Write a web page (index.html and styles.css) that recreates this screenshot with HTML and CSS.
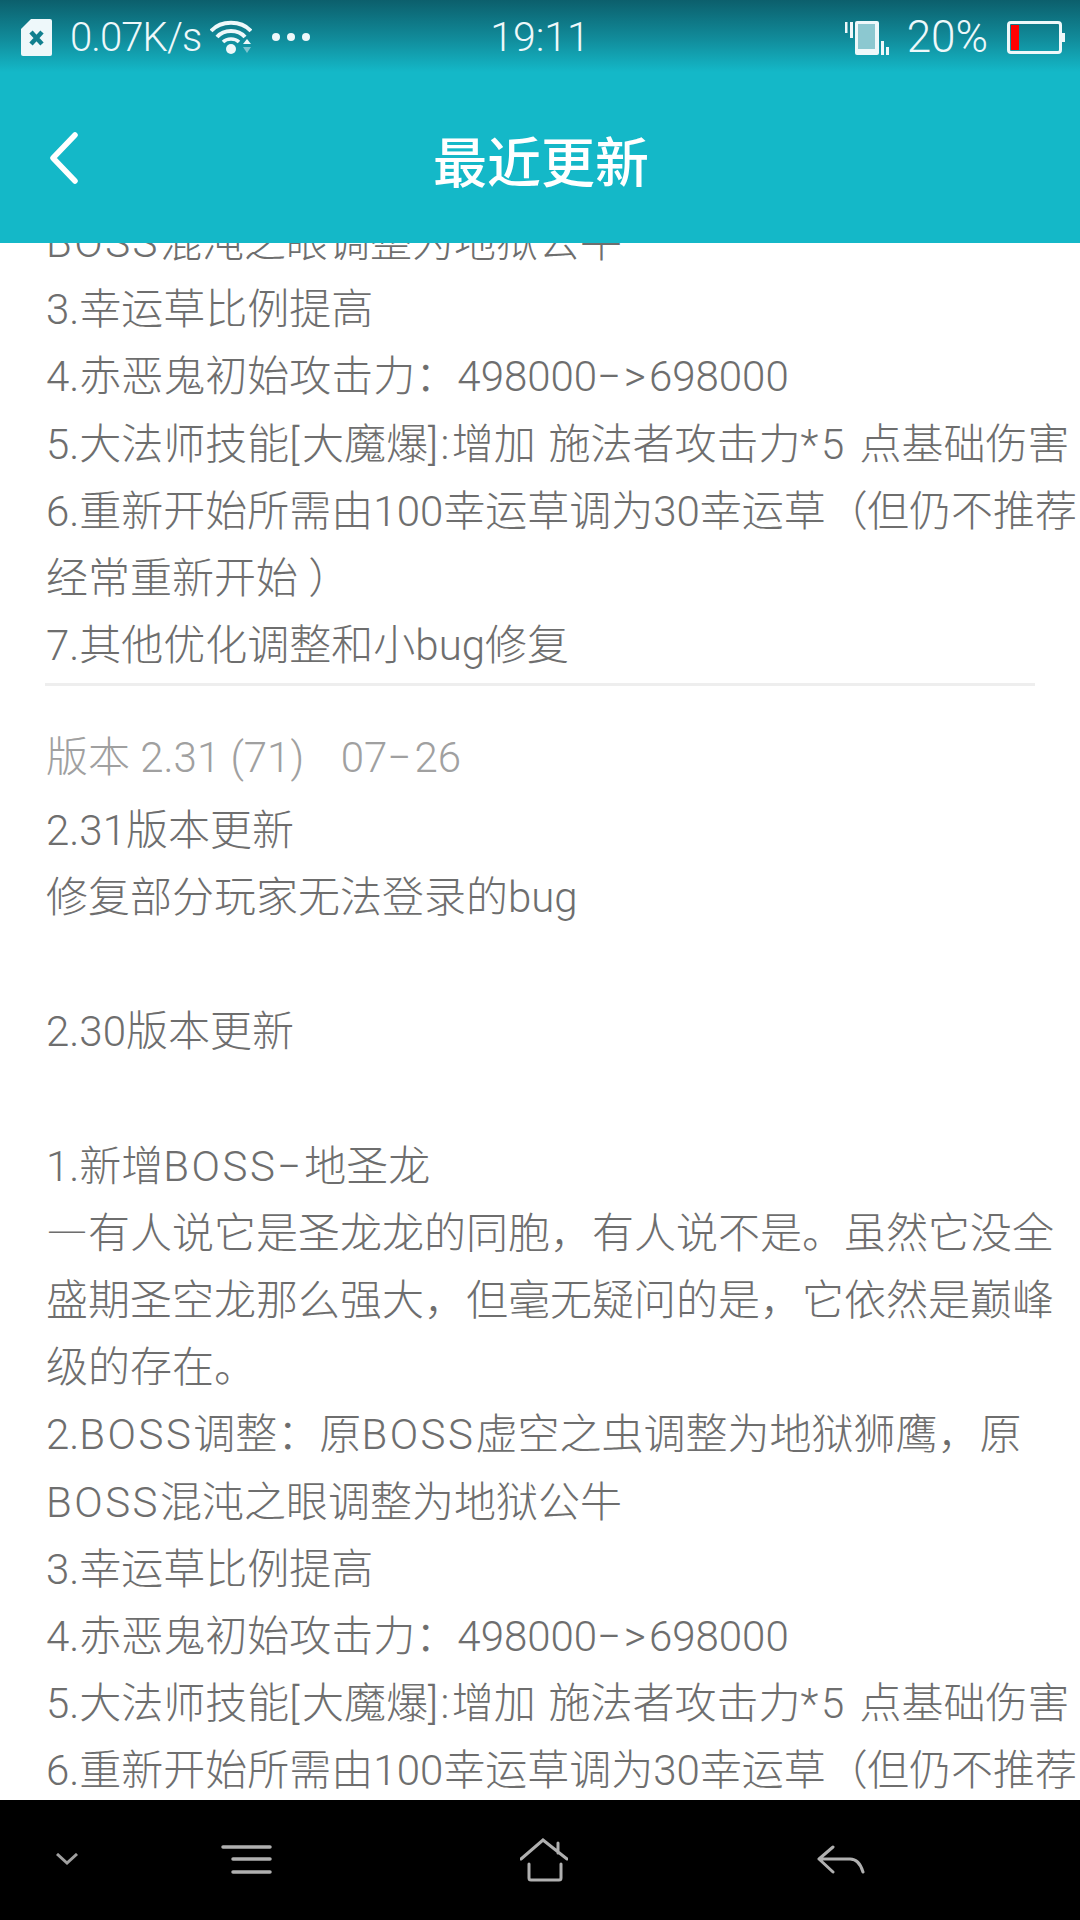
FILE: index.html
```html
<!DOCTYPE html>
<html lang="zh-CN">
<head>
    <meta charset="UTF-8">
    <meta name="viewport" content="width=device-width, initial-scale=1.0">
    <title>最近更新</title>
    <link rel="stylesheet" href="styles.css">
</head>
<body>
    <div class="screen">
        <header class="header">
            <div class="status-bar">
                <div class="status-left">
                    <svg class="icon-sim" width="31" height="37" viewBox="0 0 31 37">
                        <path d="M10 0H29a2 2 0 0 1 2 2V35a2 2 0 0 1-2 2H2a2 2 0 0 1-2-2V10Z" fill="#eef8fa"/>
                        <path d="M10 13L21 25M21 13L10 25" stroke="#11808f" stroke-width="4.5" fill="none"/>
                    </svg>
                    <span class="speed">0.07K/s</span>
                    <svg class="icon-wifi" width="42" height="34" viewBox="0 0 42 34">
                        <path d="M1 11C11 0 31 0 41 11" stroke="#eef8fa" stroke-width="4" fill="none"/>
                        <path d="M7 17C14 9 28 9 35 17" stroke="#eef8fa" stroke-width="4" fill="none"/>
                        <path d="M13 22C17 18 25 18 29 22" stroke="#eef8fa" stroke-width="3.5" fill="none"/>
                        <circle cx="21" cy="29" r="5" fill="#eef8fa"/>
                        <path d="M33 24L37 19L41 24Z" fill="#eef8fa"/>
                        <path d="M33 27L37 33L41 27Z" fill="#7cc4cf"/>
                    </svg>
                    <div class="dots"><i></i><i></i><i></i></div>
                </div>
                <div class="time">19:11</div>
                <div class="status-right">
                    <svg class="icon-vibrate" width="44" height="35" viewBox="0 0 44 35">
                        <rect x="0" y="2" width="2.5" height="11" fill="#eef8fa"/>
                        <rect x="5" y="2" width="3" height="16" fill="#eef8fa"/>
                        <rect x="10" y="1" width="24" height="34" rx="2" fill="#eef8fa"/>
                        <rect x="13" y="4" width="17" height="25" fill="#8cc8d0"/>
                        <rect x="36" y="21" width="3" height="14" fill="#eef8fa"/>
                        <rect x="41" y="27" width="3" height="8" fill="#eef8fa"/>
                    </svg>
                    <span class="battery-text">20%</span>
                    <svg class="icon-battery" width="58" height="33" viewBox="0 0 58 33">
                        <rect x="1.5" y="1.5" width="52" height="30" rx="2.5" stroke="#eef8fa" stroke-width="3" fill="none"/>
                        <rect x="4" y="4" width="8" height="25" fill="#ff0000"/>
                        <rect x="55" y="12" width="3" height="9" fill="#eef8fa"/>
                    </svg>
                </div>
            </div>
            <div class="title-bar">
                <svg class="icon-back" width="30" height="52" viewBox="0 0 30 52">
                    <path d="M26 3L4 26L26 49" stroke="#ffffff" stroke-width="5.5" stroke-linecap="round" stroke-linejoin="round" fill="none"/>
                </svg>
                <h1 class="title">最近更新</h1>
            </div>
        </header>

        <main class="content">
            <div class="notes scrolled">
                <span class="wide">BOSS</span>混沌之眼调整为地狱公牛<br>
                3.幸运草比例提高<br>
                4.赤恶鬼初始攻击力：498000<span class="arrow">−&gt;</span>698000<br>
                5.大法师技能<span class="wide">[</span>大魔爆<span class="wide">]:</span>增加<span class="wide"> </span>施法者攻击力<span class="wide">*5 </span>点基础伤害<br>
                6.重新开始所需由100幸运草调为30幸运草<span class="paren">（ </span>但仍不推荐<br>
                经常重新开始 ）<br>
                7.其他优化调整和小bug修复
            </div>
            <hr class="divider">
            <div class="version">版本 2.31 (71)&nbsp;&nbsp; <span class="date">07<span class="arrow">−</span>26</span></div>
            <div class="notes">
                2.31版本更新<br>
                修复部分玩家无法登录的bug<br>
                <br>
                2.30版本更新<br>
                <br>
                1.新增<span class="wide">BOSS</span><span class="arrow">−</span>地圣龙<br>
                <span class="cjk">—</span>有人说它是圣龙龙的同胞，有人说不是。虽然它没全<br>
                盛期圣空龙那么强大，但毫无疑问的是，它依然是巅峰<br>
                级的存在。<br>
                2.<span class="wide">BOSS</span>调整：原<span class="wide">BOSS</span>虚空之虫调整为地狱狮鹰，原<br>
                <span class="wide">BOSS</span>混沌之眼调整为地狱公牛<br>
                3.幸运草比例提高<br>
                4.赤恶鬼初始攻击力：498000<span class="arrow">−&gt;</span>698000<br>
                5.大法师技能<span class="wide">[</span>大魔爆<span class="wide">]:</span>增加<span class="wide"> </span>施法者攻击力<span class="wide">*5 </span>点基础伤害<br>
                6.重新开始所需由100幸运草调为30幸运草<span class="paren">（ </span>但仍不推荐
            </div>
        </main>

        <nav class="nav-bar">
            <svg width="22" height="14" viewBox="0 0 22 14" class="nav-hide">
                <path d="M1 1L11 10L21 1" stroke="#a0a0a0" stroke-width="3" fill="none"/>
            </svg>
            <svg width="51" height="30" viewBox="0 0 51 30" class="nav-menu">
                <path d="M2 2H49M12 14H49M12 27H49" stroke="#b0b0b0" stroke-width="3.5" fill="none" stroke-linecap="round"/>
            </svg>
            <svg width="48" height="44" viewBox="0 0 48 44" class="nav-home">
                <path d="M1 21L23 2L47 21M38 5V15" stroke="#b0b0b0" stroke-width="3" fill="none" stroke-linecap="round"/>
                <path d="M9 26V40a2 2 0 0 0 2 2H39a2 2 0 0 0 2-2V26" stroke="#b0b0b0" stroke-width="3" fill="none" stroke-linecap="round"/>
            </svg>
            <svg width="50" height="30" viewBox="0 0 50 30" class="nav-back">
                <path d="M17 2L3 14L17 27M3 14H34C41 14 45 20 47 27" stroke="#b0b0b0" stroke-width="3" fill="none" stroke-linecap="round" stroke-linejoin="round"/>
            </svg>
        </nav>
    </div>
</body>
</html>
```

FILE: styles.css
```css
* {
    box-sizing: border-box;
}

body {
    margin: 0;
    background-color: #ffffff;
    font-family: Roboto, "Noto Sans CJK SC", sans-serif;
    font-weight: 300;
}

.screen {
    width: 1080px;
    height: 1920px;
    display: flex;
    flex-direction: column;
    overflow: hidden;
}

.header {
    height: 243px;
    flex: none;
    background: linear-gradient(to bottom, #0c5f6c 0, #118d9c 40px, #14b8c8 72px);
    color: #ffffff;
}

.status-bar {
    height: 74px;
    padding: 0 15px 0 21px;
    display: grid;
    grid-template-columns: 1fr auto 1fr;
    align-items: center;
    font-size: 40px;
    color: #eef8fa;
}

.status-left,
.status-right {
    display: flex;
    align-items: center;
}

.status-right {
    justify-content: flex-end;
}

.speed {
    margin-left: 18px;
    letter-spacing: -0.9px;
}

.icon-wifi {
    margin-left: 9px;
}

.dots {
    display: flex;
    gap: 7px;
    margin-left: 20px;
}

.dots i {
    width: 8px;
    height: 8px;
    border-radius: 50%;
    background-color: #eef8fa;
}

.time {
    margin-right: 6px;
    font-size: 41px;
}

.battery-text {
    margin: 0 19px 0 18px;
    font-size: 44px;
}

.title-bar {
    height: 169px;
    padding-bottom: 2px;
    display: grid;
    grid-template-columns: 1fr auto 1fr;
    align-items: center;
}

.icon-back {
    margin-left: 49px;
}

.title {
    margin: 3px 0 0 2px;
    font-size: 54px;
    font-weight: 500;
}

.content {
    flex: 1;
    min-height: 0;
    overflow: hidden;
    padding-left: 46px;
    font-size: 42px;
    line-height: 67.2px;
    color: #6e6e6e;
    white-space: nowrap;
}

.notes {
    margin-top: 5px;
}

.notes.scrolled {
    margin-top: -34px;
}

.wide {
    letter-spacing: 2.5px;
}

.arrow {
    letter-spacing: 3px;
}

.paren {
    letter-spacing: -5.5px;
}

.cjk {
    font-family: "Noto Sans CJK SC", sans-serif;
    line-height: 1;
}

.divider {
    width: 990px;
    height: 3px;
    margin: 4px 0 0 -1px;
    border: none;
    background-color: #eeeeee;
}

.version {
    margin-top: 38px;
    color: #a0a0a0;
}

.date {
    margin-left: 6px;
}

.nav-bar {
    height: 120px;
    flex: none;
    background-color: #000000;
    display: flex;
    align-items: center;
}

.nav-hide {
    margin-left: 56px;
}

.nav-menu {
    margin-left: 143px;
}

.nav-home {
    margin-left: 248px;
}

.nav-back {
    margin-left: 248px;
}
```
